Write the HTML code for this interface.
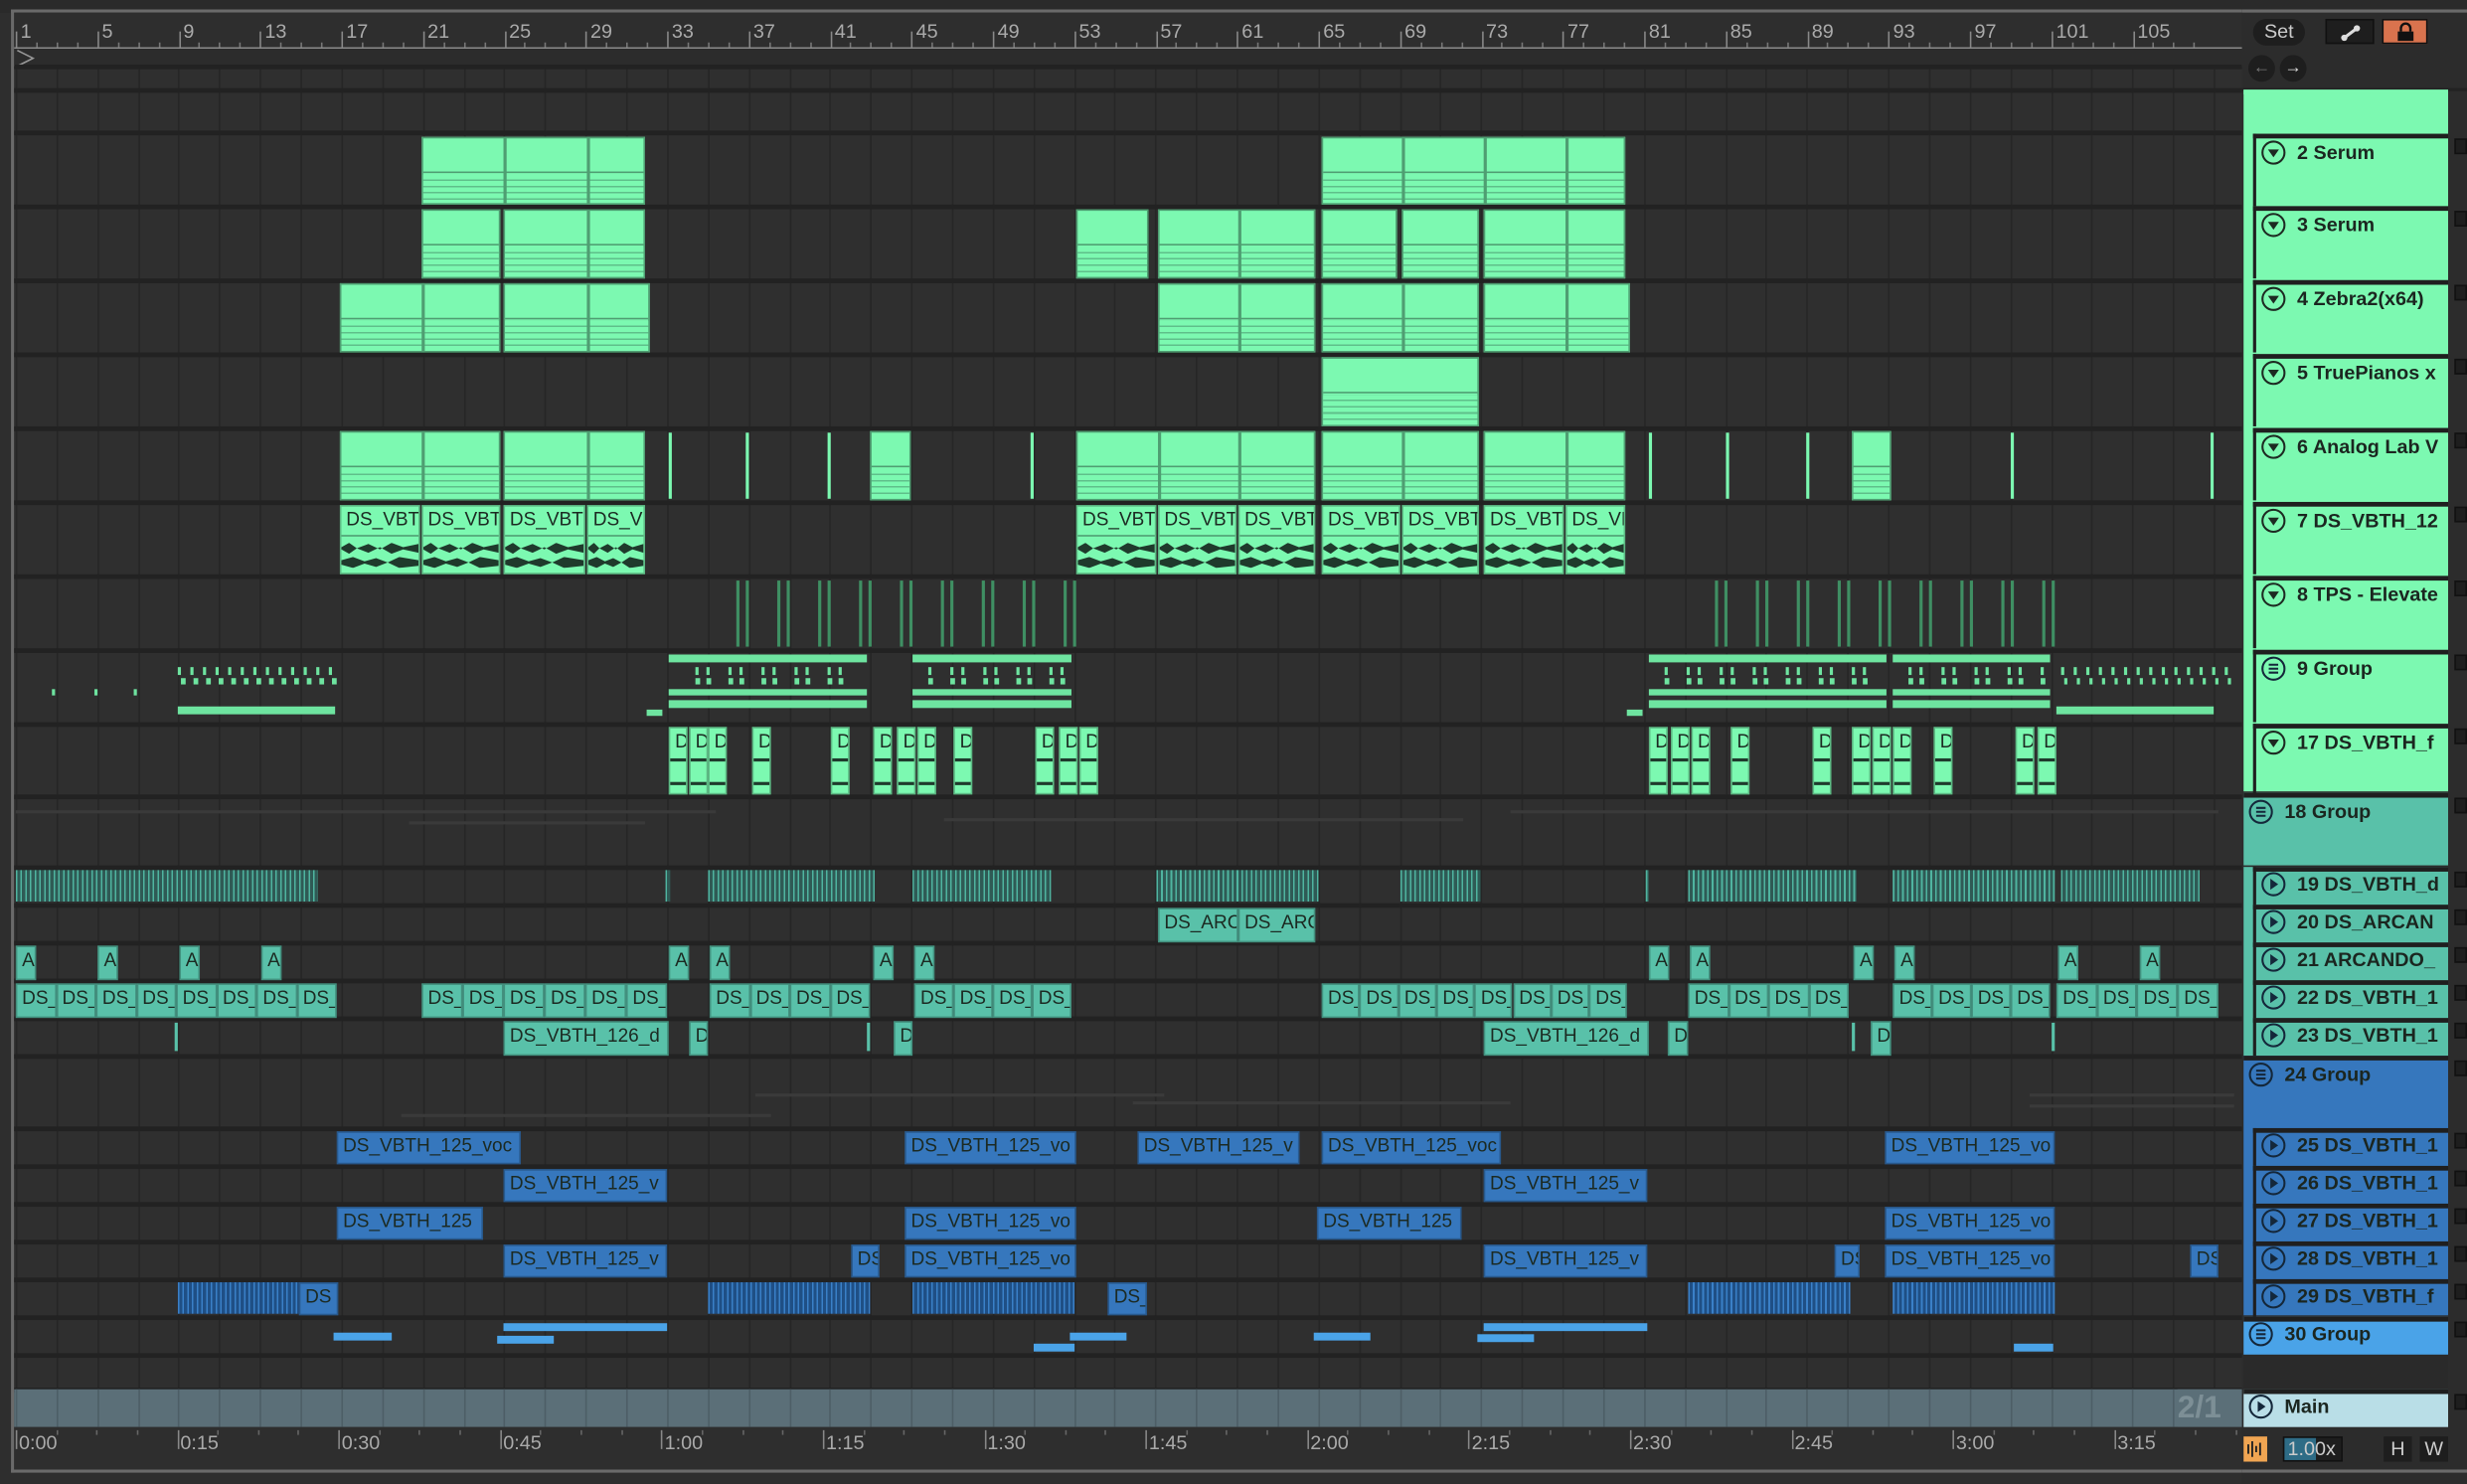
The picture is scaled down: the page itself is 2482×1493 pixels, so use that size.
<!DOCTYPE html>
<html><head><meta charset="utf-8">
<style>
html,body{margin:0;padding:0;background:#2b2b2b;overflow:hidden;width:2482px;height:1492px}
#w{position:absolute;left:0;top:0;width:1568px;height:943px;transform:scale(1.58291);transform-origin:0 0;background:#2e2e2e;font-family:"Liberation Sans",sans-serif;overflow:hidden}
.a{position:absolute;box-sizing:border-box}
.lbl{font-size:12px;color:#1c2a22;white-space:nowrap;overflow:hidden;padding-left:3px;line-height:17px}
</style></head><body><div id="w"></div>
<script>
const W=document.getElementById('w');
function R(x,y,w,h,st,html){const d=document.createElement('div');d.className='a';d.style.cssText=`left:${x}px;top:${y}px;width:${w}px;height:${h}px;`+(st||'');if(html)d.innerHTML=html;W.appendChild(d);return d;}
R(0,0,1568,8,'background:#2a2a2a');
R(7,6,1418,2,'background:#6a6a6a');
R(7,6,2,930,'background:#6a6a6a');
R(7,934,1418,2,'background:#6a6a6a');
R(9,8,1416,22,'background:#2e2e2e');
R(9,30,1416,1,'background:#8a8a8a');
R(9,41,1416,1,'background:#8a8a8a');
R(9,31,1416,10,'background:#2c2c2c');
R(10,30,14,12,'',`<svg width="14" height="12"><path d="M1 1 L11 6 L1 11" fill="none" stroke="#999" stroke-width="1"/></svg>`);
for(let k=0;k<27;k++){const x=10+k*51.75;R(x,20,1,10,'background:#888');R(x+3,13,30,14,'font-size:12.5px;color:#aaa;line-height:14px',''+(1+4*k));for(let j=1;j<4;j++)R(x+j*12.94,27,1,3,'background:#777');}
R(9,42,1416,843,'background:#2f2f2f');
for(let x=10;x<1425;x+=25.87)R(x,42,1,843,'background:#262626');
const rows=[42,57,84,131,178,225,272,319,366,413,460,506,551,575,599,623,647,671,717,741,765,789,813,837,861,883];
rows.forEach(y=>R(9,y-1,1416,3,'background:#222'));
// faint lines in group rows
[[10,455,515],[260,410,522],[600,930,520],[960,1410,515]].forEach(c=>R(c[0],c[2],c[1]-c[0],2,'background:#3a3a3a'));
[[480,740,695],[720,960,700],[255,490,708],[1290,1420,695],[1290,1420,702]].forEach(c=>R(c[0],c[2],c[1]-c[0],2,'background:#3a3a3a'));
R(9,883,1416,24,'background:#5b6f78');
for(let x=10;x<1385;x+=25.87)R(x,883,1,24,'background:#4d5e66');
R(1384,883,41,24,'background:#5b6f78;font-size:20px;color:#7d8f96;font-weight:bold;line-height:24px','2/1');
R(9,907,1416,27,'background:#2e2e2e');
const times=['0:00','0:15','0:30','0:45','1:00','1:15','1:30','1:45','2:00','2:15','2:30','2:45','3:00','3:15'];
times.forEach((t,i)=>{const x=10+i*102.6;R(x,909,1,12,'background:#888');R(x+2,910,40,14,'font-size:12.5px;color:#aaa',t);for(let j=1;j<4;j++)R(x+j*25.6,909,1,3,'background:#666');});
const G='#7cf9b1',GD='#4f9e72',T='#59c1a9',B='#3677bd',LB='#4aa3e8';
function midi(x1,x2,y,h,divs){R(x1,y+1,x2-x1,h-2,`background:${G};border:1px solid ${GD}`);R(x1+1,y+h/2,x2-x1-2,1,`background:${GD}`);R(x1+1,y+h/2+2,x2-x1-2,h/2-4,`background:repeating-linear-gradient(180deg,${G} 0 3px,#5fbf8a 3px 4px)`);(divs||[]).forEach(d=>R(d,y+1,1.5,h-2,`background:${GD}`));}
function thin(x,y,h,c){R(x,y+2,2,h-4,'background:'+(c||G));}
function clip(x1,x2,y,h,c,t,st){return R(x1,y+1,x2-x1,h-2,`background:${c};border:1px solid rgba(0,0,0,.25);`+(st||''),t?`<div class="lbl">${t}</div>`:'');}
[[268,410,[320,373]],[840,1033,[891,943,995]]].forEach(c=>{midi(c[0],c[1],86,45,c[2]);});
[[268,318],[320,410,[373]],[684,730],[736,836,[787]],[840,888],[891,940],[943,1033,[995]]].forEach(c=>midi(c[0],c[1],132,46,c[2]));
[[216,318,[268]],[320,413,[373]],[736,836,[787]],[840,940,[891]],[943,1036,[995]]].forEach(c=>midi(c[0],c[1],179,46,c[2]));
midi(840,940,226,46);
[[216,318,[268]],[320,410,[373]],[553,579],[684,836,[736,787]],[840,940,[891]],[943,1033,[995]],[1177,1202]].forEach(c=>midi(c[0],c[1],273,46,c[2]));
[425,474,526,655,1048,1097,1148,1278,1405].forEach(x=>thin(x,273,46));
[[216,267],[268,318],[320,372],[373,410],[684,735],[736,786],[787,836],[840,890],[891,940],[943,994],[995,1033]].forEach(c=>{clip(c[0],c[1],320,46,G,'DS_VBTH_12');R(c[0]+1,340,c[1]-c[0]-2,1,'background:'+GD);R(c[0]+1,345,c[1]-c[0]-2,7,'background:#1f3a2c;clip-path:polygon(0 40%,10% 0,20% 50%,35% 10%,50% 60%,65% 0,80% 40%,100% 10%,100% 90%,80% 60%,65% 100%,50% 40%,35% 90%,20% 50%,10% 100%,0 60%)');R(c[0]+1,354,c[1]-c[0]-2,7,'background:#1f3a2c;clip-path:polygon(0 30%,15% 0,30% 40%,45% 10%,60% 50%,75% 0,100% 30%,100% 80%,75% 100%,60% 50%,45% 90%,30% 60%,15% 100%,0 70%)');});
for(let x=468;x<682;x+=13)if(((x-468)/13|0)%2==0){thin(x,367,46,'#3f8f63');thin(x+6,367,46,'#3f8f63');}
for(let x=1090;x<1306;x+=13)if(((x-1090)/13|0)%2==0){thin(x,367,46,'#3f8f63');thin(x+6,367,46,'#3f8f63');}
function gbits(x1,x2){R(x1,416,x2-x1,5,'background:#6ee4a0');R(x1,445,x2-x1,5,'background:#6ee4a0');R(x1,438,x2-x1,4,'background:#6ee4a0');for(let x=x1+10;x<x2-4;x+=7){if((x*7)%3==0)continue;R(x,424,2,5,'background:#6ee4a0');R(x,431,3,4,'background:#6ee4a0');}}
gbits(425,551);gbits(580,681);gbits(1048,1199);gbits(1203,1303);
R(1307,449,100,5,'background:#6ee4a0');R(411,451,10,4,'background:#6ee4a0');R(1034,451,10,4,'background:#6ee4a0');
for(let x=1310;x<1415;x+=8){R(x,424,2,5,'background:#6ee4a0');R(x+2,431,2,4,'background:#6ee4a0');}
R(113,449,100,5,'background:#6ee4a0');
for(let x=113;x<215;x+=8){R(x,424,2,5,'background:#6ee4a0');R(x+2,431,3,4,'background:#6ee4a0');}
[33,60,85].forEach(x=>R(x,438,2,4,'background:#6ee4a0'));
[425,438,450,478,528,555,570,583,606,658,673,686,1048,1062,1075,1100,1152,1177,1190,1203,1229,1281,1295].forEach(x=>{clip(x,x+12,461,45,G,'D');R(x+1,482,10,2,'background:#1f3a2c');R(x+1,497,10,2,'background:#1f3a2c');});
[[10,202],[423,426],[450,556],[580,668],[735,838],[890,941],[1046,1048],[1073,1180],[1203,1306],[1310,1398]].forEach(c=>R(c[0],553,c[1]-c[0],20,`background:repeating-linear-gradient(90deg,#4fb4a0 0 1px,#2f5a55 1px 3px)`));
clip(736,787,576,24,T,'DS_ARC');clip(787,836,576,24,T,'DS_ARC');
[10,62,114,166,425,451,555,581,1048,1074,1178,1204,1308,1360].forEach(x=>clip(x,x+13,600,24,T,'A'));
function ds(x1,n,w){for(let i=0;i<n;i++)clip(x1+i*w,x1+(i+1)*w,624,24,T,'DS_');}
ds(10,8,25.5);ds(268,6,26);ds(451,4,25.5);ds(581,4,25);ds(840,8,24.3);ds(1073,4,25.5);ds(1203,4,25);ds(1307,4,25.7);
clip(320,425,648,24,T,'DS_VBTH_126_d');clip(438,450,648,24,T,'D');clip(568,580,648,24,T,'D');clip(943,1048,648,24,T,'DS_VBTH_126_d');clip(1060,1073,648,24,T,'D');clip(1189,1202,648,24,T,'D');
[111,551,1177,1304].forEach(x=>R(x,650,2,18,'background:'+T));
const bl=[[718,[[214,331,'DS_VBTH_125_voc'],[575,684,'DS_VBTH_125_vo'],[723,826,'DS_VBTH_125_v'],[840,954,'DS_VBTH_125_voc'],[1198,1306,'DS_VBTH_125_vo']]],
[742,[[320,424,'DS_VBTH_125_v'],[943,1047,'DS_VBTH_125_v']]],
[766,[[214,307,'DS_VBTH_125'],[575,684,'DS_VBTH_125_vo'],[837,929,'DS_VBTH_125'],[1198,1306,'DS_VBTH_125_vo']]],
[790,[[320,424,'DS_VBTH_125_v'],[541,559,'DS'],[575,684,'DS_VBTH_125_vo'],[943,1047,'DS_VBTH_125_v'],[1166,1182,'DS'],[1198,1306,'DS_VBTH_125_vo'],[1392,1410,'DS']]]];
bl.forEach(r=>r[1].forEach(c=>clip(c[0],c[1],r[0],23,B,c[2])));
[[113,190],[450,553],[580,683],[1073,1176],[1203,1306]].forEach(c=>R(c[0],815,c[1]-c[0],20,`background:repeating-linear-gradient(90deg,#3a80c8 0 1px,#1f4f85 1px 3px)`));
clip(190,215,814,23,B,'DS');clip(704,729,814,23,B,'DS_');
[[212,249,847],[316,352,849],[320,424,841],[657,683,854],[680,716,847],[835,871,847],[939,975,848],[943,1047,841],[1280,1305,854]].forEach(c=>R(c[0],c[2],c[1]-c[0],5,'background:'+LB));
R(1425,8,143,935,'background:#2c2c2c');
R(1425,0,143,8,'background:#2a2a2a');
R(1425,6,143,2,'background:#6a6a6a');
R(1432,12,33,17,'background:#1e1e1e;border-radius:9px;color:#ccc;font-size:12.5px;text-align:center;line-height:17px','Set');
R(1478,12,31,16,'background:#1e1e1e;border:1px solid #111','<svg width="31" height="16"><path d="M11 11 L19 5" stroke="#ddd" stroke-width="2"/><circle cx="11" cy="11" r="2" fill="#ddd"/><circle cx="19" cy="5" r="2" fill="#ddd"/></svg>');
R(1514,12,29,16,'background:#d9734e;border:1px solid #111','<svg width="29" height="16"><rect x="9" y="7" width="10" height="6" fill="#111"/><path d="M11 7 V5 a3 3 0 0 1 6 0 V7" stroke="#111" stroke-width="1.5" fill="none"/></svg>');
R(1429,35,17,17,'background:#1e1e1e;border-radius:50%;color:#777;font-size:11px;text-align:center;line-height:17px','←');
R(1449,35,17,17,'background:#1e1e1e;border-radius:50%;color:#ddd;font-size:11px;text-align:center;line-height:17px','→');
R(1425,56,143,2,'background:#222');
R(1426,57,130,446,'background:'+G);
R(1426,504,130,46,'background:'+T);
R(1426,551,130,120,'background:'+T);
R(1426,671,130,165,'background:'+B);
R(1426,837,130,24,'background:'+LB);
R(1426,883,130,24,'background:#b9dee7');
R(1426,861,130,22,'background:#2a2a2a');
function hdr(y,h,t,ic,ind){const x=ind?1432:1426;R(x,y,1556-x,h,'border-top:3px solid #1f1f1f;'+(ind?'border-left:2px solid #1f1f1f;':''));const ix=x+(ind?5:3);let icon;
if(ic=='d')icon='<svg width="16" height="16"><circle cx="8" cy="8" r="7" fill="none" stroke="#1d2a22" stroke-width="1.3"/><path d="M4.5 6 L11.5 6 L8 11Z" fill="#1d2a22"/></svg>';
else if(ic=='p')icon='<svg width="16" height="16"><circle cx="8" cy="8" r="7" fill="none" stroke="#14273a" stroke-width="1.3"/><path d="M6 4.5 L11 8 L6 11.5Z" fill="#14273a"/></svg>';
else icon='<svg width="16" height="16"><circle cx="8" cy="8" r="7" fill="none" stroke="#14273a" stroke-width="1.3"/><path d="M5 5.5 H11 M5 8 H11 M5 10.5 H11" stroke="#14273a" stroke-width="1.3"/></svg>';
const ty=y+(h>30?4:3);
R(ix,ty,16,16,'',icon);R(ix+23,ty,110,16,'font-size:12.5px;font-weight:bold;color:#1b2620;line-height:16px;white-space:nowrap;overflow:hidden',t);}
[[85,'2 Serum'],[131,'3 Serum'],[178,'4 Zebra2(x64)'],[225,'5 TruePianos x'],[272,'6 Analog Lab V'],[319,'7 DS_VBTH_12'],[366,'8 TPS - Elevate'],[413,'9 Group','g'],[460,'17 DS_VBTH_f']].forEach(r=>hdr(r[0],46,r[1],r[2]||'d',1));
hdr(504,46,'18 Group','g',0);
[[551,'19 DS_VBTH_d'],[575,'20 DS_ARCAN'],[599,'21 ARCANDO_'],[623,'22 DS_VBTH_1'],[647,'23 DS_VBTH_1']].forEach(r=>hdr(r[0],24,r[1],'p',1));
hdr(671,46,'24 Group','g',0);
[[717,'25 DS_VBTH_1'],[741,'26 DS_VBTH_1'],[765,'27 DS_VBTH_1'],[789,'28 DS_VBTH_1'],[813,'29 DS_VBTH_f']].forEach(r=>hdr(r[0],24,r[1],'p',1));
hdr(837,24,'30 Group','g',0);
hdr(883,24,'Main','p',0);
R(1426,57,130,3,'background:'+G);
[85,131,178,225,272,319,366,413,460,504,551,575,599,623,647,671,717,741,765,789,813,837,883].forEach(y=>{R(1560,y+3,8,10,'background:#1e1e1e;border:1px solid #111');});
R(1426,913,15,16,'background:#f0a552','<svg width="15" height="16"><path d="M3 5V11M5.5 3V13M8 6V10M10.5 4V12" stroke="#222" stroke-width="1.2"/></svg>');
R(1451,913,38,16,'background:#1e1e1e;border:1px solid #111;color:#ccc;font-size:12.5px;line-height:14px;padding-left:2px','<span style="position:absolute;left:0;top:0;width:20px;height:14px;background:#2e6c86"></span><span style="position:relative">1.00x</span>');
R(1515,913,18,16,'background:#1e1e1e;color:#ccc;font-size:12.5px;text-align:center;line-height:16px','H');
R(1538,913,18,16,'background:#1e1e1e;color:#ccc;font-size:12.5px;text-align:center;line-height:16px','W');
R(1425,934,143,2,'background:#6a6a6a');
</script></body></html>
